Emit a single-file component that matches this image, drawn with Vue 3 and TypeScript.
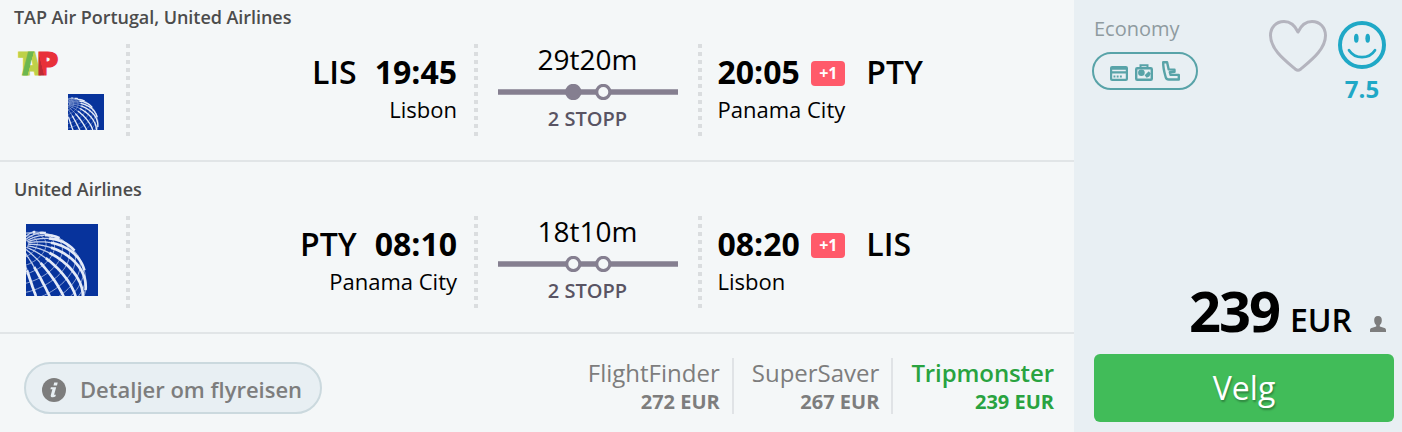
<script setup lang="ts">
interface Leg {
  airlines: string
  logos: 'pair' | 'single'
  from: { code: string; time: string; city: string }
  to: { code: string; time: string; city: string }
  duration: string
  stops: string
  firstStopFilled: boolean
}

interface Offer {
  name: string
  price: string
  best: boolean
}

const legs: Leg[] = [
  {
    airlines: 'TAP Air Portugal, United Airlines',
    logos: 'pair',
    from: { code: 'LIS', time: '19:45', city: 'Lisbon' },
    to: { code: 'PTY', time: '20:05', city: 'Panama City' },
    duration: '29t20m',
    stops: '2 STOPP',
    firstStopFilled: true,
  },
  {
    airlines: 'United Airlines',
    logos: 'single',
    from: { code: 'PTY', time: '08:10', city: 'Panama City' },
    to: { code: 'LIS', time: '08:20', city: 'Lisbon' },
    duration: '18t10m',
    stops: '2 STOPP',
    firstStopFilled: false,
  },
]

const offers: Offer[] = [
  { name: 'FlightFinder', price: '272 EUR', best: false },
  { name: 'SuperSaver', price: '267 EUR', best: false },
  { name: 'Tripmonster', price: '239 EUR', best: true },
]

type Vec = [number, number, number]

// Orthographic globe grid: the pole leans up and to the left, towards the viewer.
const radius = 51
const cx = 9
const cy = 59
const pole: Vec = [-0.3, -0.74, Math.sqrt(1 - 0.09 - 0.5476)]
const cross = (a: Vec, b: Vec): Vec => [
  a[1] * b[2] - a[2] * b[1],
  a[2] * b[0] - a[0] * b[2],
  a[0] * b[1] - a[1] * b[0],
]
const unit = (v: Vec): Vec => {
  const n = Math.hypot(...v)
  return [v[0] / n, v[1] / n, v[2] / n]
}
const east = unit(cross(pole, [0, 0, 1]))
const north = cross(pole, east)

function trace(steps: number, at: (i: number) => [number, number]): string {
  let d = ''
  let pen = false
  for (let i = 0; i <= steps; i++) {
    const [colat, lon] = at(i)
    const s = Math.sin(colat)
    const p = [0, 1, 2].map(
      (k) => Math.cos(colat) * pole[k] + s * (Math.cos(lon) * east[k] + Math.sin(lon) * north[k]),
    )
    if (p[2] < 0) {
      pen = false
      continue
    }
    d += `${pen ? 'L' : 'M'}${(cx + radius * p[0]).toFixed(1)} ${(cy + radius * p[1]).toFixed(1)}`
    pen = true
  }
  return d
}

const rad = Math.PI / 180
const meridiansAt = (from: number, to: number): string =>
  Array.from({ length: 24 }, (_, m) =>
    trace(40, (i) => [(from + (i * (to - from)) / 40) * rad, (m * 15 + 5) * rad]),
  ).join('')
const innerMeridians = meridiansAt(10, 36)
const outerMeridians = meridiansAt(36, 150)
const parallels = Array.from({ length: 12 }, (_, n) =>
  trace(72, (i) => [(n + 1) * 10 * rad, i * 5 * rad]),
).join('')
</script>

<template>
  <div class="card">
    <main class="trip">
      <section v-for="(leg, i) in legs" :key="i" class="leg">
        <div class="airlines">{{ leg.airlines }}</div>
        <div class="leg-body">
          <div class="logos" :class="leg.logos">
            <svg v-if="leg.logos === 'pair'" class="tap" viewBox="0 0 42 26">
              <defs>
                <linearGradient id="tapA" gradientUnits="userSpaceOnUse" x1="5" y1="11" x2="20" y2="15">
                  <stop offset="0.55" stop-color="#6cb74f" />
                  <stop offset="0.58" stop-color="#bed148" />
                </linearGradient>
                <linearGradient id="tapP" gradientUnits="userSpaceOnUse" x1="20" y1="14" x2="30" y2="11.5">
                  <stop offset="0.4" stop-color="#bd2a36" />
                  <stop offset="0.44" stop-color="#e83039" />
                </linearGradient>
              </defs>
              <text class="tap-letter" x="1" y="24" textLength="17" lengthAdjust="spacingAndGlyphs" fill="#bed148" stroke="#bed148">T</text>
              <text class="tap-letter" x="5.500" y="24" textLength="18" lengthAdjust="spacingAndGlyphs" fill="url(#tapA)" stroke="url(#tapA)">A</text>
              <text class="tap-letter" x="19.500" y="24" textLength="22" lengthAdjust="spacingAndGlyphs" fill="url(#tapP)" stroke="url(#tapP)">P</text>
            </svg>
            <svg class="globe" viewBox="0 0 72 72">
              <rect width="72" height="72" fill="#07339c" />
              <circle :cx="cx" :cy="cy" :r="radius" fill="none" stroke="#8fa5d6" stroke-width="1" />
              <path :d="parallels" fill="none" stroke="#8fa5d6" stroke-width="1" />
              <path :d="innerMeridians" fill="none" stroke="#c3cfec" stroke-width="1.3" />
              <path :d="outerMeridians" fill="none" stroke="#e4eaf7" stroke-width="2.7" />
            </svg>
          </div>
          <div class="dots"></div>
          <div class="place depart">
            <div class="top"><span class="code">{{ leg.from.code }}</span><b class="time">{{ leg.from.time }}</b></div>
            <div class="city">{{ leg.from.city }}</div>
          </div>
          <div class="dots"></div>
          <div class="duration">
            <div class="length">{{ leg.duration }}</div>
            <svg class="track" viewBox="0 0 180 16">
              <path d="M0 8H180" stroke="#857f90" stroke-width="5.6" />
              <circle cx="75.3" cy="8" r="6.6" :fill="leg.firstStopFilled ? '#857f90' : '#f4f7f8'" stroke="#857f90" stroke-width="3.2" />
              <circle cx="105.3" cy="8" r="6.6" fill="#f4f7f8" stroke="#857f90" stroke-width="3.2" />
            </svg>
            <div class="stops">{{ leg.stops }}</div>
          </div>
          <div class="dots"></div>
          <div class="place arrive">
            <div class="top"><b class="time">{{ leg.to.time }}</b><span class="badge">+1</span><span class="code">{{ leg.to.code }}</span></div>
            <div class="city">{{ leg.to.city }}</div>
          </div>
        </div>
      </section>
      <footer class="foot">
        <button class="details">
          <svg class="info" viewBox="0 0 24 24">
            <circle cx="12" cy="12" r="12" fill="#7d7d7d" />
            <path d="M12.2 4.400h3.500l-.7 3.200h-3.500zM8.900 9.200h5.300l-2.100 7.600h1.800l-.5 1.800c-1.700.9-5.100 1-4.700-1.200l1.700-6.200H8.400z" fill="#e8eff3" />
          </svg>
          <span>Detaljer om flyreisen</span>
        </button>
        <div class="offers">
          <div v-for="offer in offers" :key="offer.name" class="offer" :class="{ best: offer.best }">
            <div class="offer-name">{{ offer.name }}</div>
            <div class="offer-price">{{ offer.price }}</div>
          </div>
        </div>
      </footer>
    </main>
    <aside class="side">
      <div class="side-top">
        <div>
          <div class="cabin">Economy</div>
          <div class="amenities">
            <svg class="a-card" viewBox="0 0 18 15">
              <rect x="1.1" y="1.1" width="15.800" height="12.800" rx="1" fill="none" stroke="#58a3a8" stroke-width="2.200" />
              <path d="M1 2.600H17M1 6.400H17" stroke="#58a3a8" stroke-width="2.200" />
              <path d="M3.500 10.600h8.500" stroke="#58a3a8" stroke-width="2" stroke-dasharray="1.900 1.300" />
            </svg>
            <svg class="a-bag" viewBox="0 0 18 17">
              <rect x="1.200" y="4.200" width="15.600" height="11.600" rx="1" fill="none" stroke="#58a3a8" stroke-width="2.400" />
              <path d="M5.500 4V1.200h7V4" fill="none" stroke="#58a3a8" stroke-width="2" />
              <circle cx="6.400" cy="8.800" r="3.300" fill="#58a3a8" />
              <path d="M9.600 11.200l4.200-4 2 2.300-1.500 3-2.700 1.200z" fill="#58a3a8" />
            </svg>
            <svg class="a-seat" viewBox="0 0 18 20">
              <path d="M1.200 1.200h3.900l1.600 7.200 5.800.3v2.200l-4.700.3.8 2.700h8.200v4.600H6.800c-1.800 0-2.700-1-3.100-2.400C2.400 11.500 1 7 1.200 1.200Z" fill="none" stroke="#58a3a8" stroke-width="2.400" stroke-linejoin="round" />
            </svg>
          </div>
        </div>
        <svg class="heart" viewBox="0 0 58 52">
          <path d="M29 12C25.500 4.500 20.500 1.500 15 1.500 7 1.500 1.500 7.500 1.500 15.500 1.500 29 15 39.500 26.500 49.300Q29 51.200 31.500 49.300C43 39.500 56.500 29 56.500 15.500 56.500 7.500 51 1.500 43 1.500 37.500 1.500 32.500 4.500 29 12Z" fill="none" stroke="#b4b4be" stroke-width="3" stroke-linejoin="round" />
        </svg>
        <div class="score">
          <svg class="smile" viewBox="0 0 48 48">
            <circle cx="24" cy="24" r="22" fill="none" stroke="#1fa8c6" stroke-width="4" />
            <ellipse cx="18.300" cy="17.200" rx="2.300" ry="4.500" fill="#1fa8c6" />
            <ellipse cx="29.700" cy="17.200" rx="2.300" ry="4.500" fill="#1fa8c6" />
            <path d="M11 29.200C17 38.500 31 38.500 37 29.200" fill="none" stroke="#1fa8c6" stroke-width="2.700" stroke-linecap="round" />
          </svg>
          <div class="rating">7.5</div>
        </div>
      </div>
      <div class="side-bottom">
        <div class="price">
          <span class="amount">239</span><span class="currency">EUR</span>
          <svg class="person" viewBox="0 0 16 16">
            <path d="M8 0C5.200 0 4 1.800 4.200 4.500 4.300 6.500 5 8 6.200 9v1.600L1.500 12C.4 12.400 0 13.200 0 14.300V16H16V14.300C16 13.200 15.600 12.400 14.500 12L9.800 10.600V9C11 8 11.700 6.500 11.800 4.500 12 1.800 10.800 0 8 0Z" fill="#7d7d7d" />
          </svg>
        </div>
        <button class="select">Velg</button>
      </div>
    </aside>
  </div>
</template>

<style>
html,
body {
  margin: 0;
  overflow: hidden;
}
</style>

<style scoped>
* {
  box-sizing: border-box;
}
.card {
  display: flex;
  width: 1402px;
  height: 432px;
  overflow: hidden;
  background: #f4f7f8;
  color: #000;
  font-family: 'Open Sans', 'Noto Sans', sans-serif;
}
svg {
  display: block;
  flex: none;
}
button {
  font-family: inherit;
  margin: 0;
}
.trip {
  width: 1074px;
}
.leg {
  height: 172px;
  padding-top: 15px;
  border-bottom: 2px solid #e1e5e7;
}
.leg:first-child {
  margin-top: -10px;
}
.airlines {
  padding-left: 14px;
  font-size: 18px;
  line-height: 24px;
  font-weight: 600;
  letter-spacing: -0.05px;
  color: #4c4c4c;
  white-space: nowrap;
}
.leg-body {
  display: flex;
  height: 107px;
  padding-top: 15px;
}
.logos {
  width: 126px;
}
.pair {
  padding: 7px 0 0 17px;
}
.tap {
  width: 42px;
  height: 26px;
  overflow: visible;
}
.tap-letter {
  font-family: 'Open Sans', sans-serif;
  font-size: 31px;
  font-weight: 800;
  stroke-width: 1.2;
}
.pair .globe {
  width: 36px;
  height: 36px;
  margin: 17px 0 0 51px;
}
.single {
  padding: 8px 0 0 26px;
}
.single .globe {
  width: 72px;
  height: 72px;
}
.dots {
  width: 4px;
  height: 92px;
  background: repeating-linear-gradient(#dadddf 0 4px, transparent 4px 8px);
}
.place {
  padding-top: 6px;
}
.depart {
  width: 344px;
  padding-right: 17px;
  text-align: right;
}
.arrive {
  padding-left: 15.5px;
}
.top {
  display: flex;
  align-items: center;
  height: 44px;
  font-size: 32px;
  line-height: 44px;
}
.depart .top {
  justify-content: flex-end;
}
.code {
  font-weight: 600;
}
.time {
  font-weight: 700;
}
.depart .time {
  margin-left: 18px;
}
.badge {
  width: 34px;
  height: 25px;
  margin: 3px 21px 0 11.5px;
  border-radius: 4px;
  background: #ff5a6a;
  color: #fff;
  font-size: 16px;
  line-height: 24px;
  font-weight: 700;
  text-align: center;
}
.city {
  font-size: 22px;
  line-height: 30px;
}
.duration {
  width: 219px;
  margin-right: 1px;
  display: flex;
  flex-direction: column;
  align-items: center;
}
.length {
  height: 40px;
  font-size: 28px;
  line-height: 30px;
}
.track {
  width: 180px;
  height: 16px;
  margin-left: 1px;
}
.stops {
  margin-top: 5px;
  font-size: 20px;
  line-height: 28px;
  font-weight: 600;
  color: #595463;
}
.foot {
  display: flex;
  justify-content: space-between;
  padding: 24px 0 0 24px;
}
.details {
  display: flex;
  align-items: center;
  width: 298px;
  height: 52px;
  margin-top: 4px;
  padding: 2px 0 0 16px;
  border: 2px solid #cbd9de;
  border-radius: 26px;
  background: #e8eff3;
  color: #7d7d7d;
  font-size: 22px;
  font-weight: 600;
  white-space: nowrap;
}
.info {
  width: 24px;
  height: 24px;
  margin: 2px 14px 0 0;
}
.offers {
  display: flex;
  padding-right: 7px;
}
.offer {
  height: 56px;
  padding: 0 12px 0 18px;
  border-right: 2px solid #e0e3e6;
  color: #7d7d7d;
  text-align: right;
}
.offer.best {
  padding-right: 13px;
  color: #29a340;
  border-right: 0;
}
.offer-name {
  font-size: 24px;
  line-height: 30px;
}
.best .offer-name {
  font-weight: 600;
  letter-spacing: -0.1px;
}
.offer-price {
  font-size: 20px;
  line-height: 28px;
  font-weight: 700;
}
.side {
  display: flex;
  flex-direction: column;
  justify-content: space-between;
  width: 328px;
  padding: 15px 8px 10px 18px;
  background: #e8eff3;
}
.side-top {
  display: flex;
}
.cabin {
  padding-left: 2px;
  font-size: 20px;
  line-height: 27px;
  color: #8f9ba0;
}
.amenities {
  display: flex;
  width: 106px;
  height: 38px;
  margin-top: 10px;
  padding-left: 16px;
  border: 2px solid #58a3a8;
  border-radius: 19px;
}
.a-card {
  width: 18px;
  height: 15px;
  margin-top: 12px;
}
.a-bag {
  width: 18px;
  height: 17px;
  margin: 10px 0 0 7px;
}
.a-seat {
  width: 18px;
  height: 20px;
  margin: 7px 0 0 9px;
  overflow: visible;
}
.heart {
  width: 58px;
  height: 52px;
  margin: 5px 0 0 71px;
}
.score {
  width: 48px;
  margin: 6px 0 0 11px;
  text-align: center;
}
.smile {
  width: 48px;
  height: 48px;
}
.rating {
  margin-top: 4px;
  font-size: 24px;
  line-height: 32px;
  font-weight: 700;
  color: #1fa8c6;
}
.price {
  display: flex;
  align-items: baseline;
  justify-content: flex-end;
  height: 82px;
  padding-right: 8px;
  line-height: 76px;
}
.amount {
  font-size: 56px;
  font-weight: 700;
  letter-spacing: -2px;
}
.currency {
  margin-left: 11px;
  font-size: 32px;
  font-weight: 600;
}
.person {
  width: 16px;
  height: 16px;
  margin-left: 18px;
}
.select {
  width: 300px;
  height: 68px;
  margin-left: 2px;
  padding: 0;
  border: 0;
  border-radius: 6px;
  background: #41bc59;
  color: #fff;
  font-size: 32px;
  line-height: 68px;
  font-weight: 400;
  text-shadow: 1px 2px 2px rgba(0, 0, 0, 0.3);
  display: block;
}
</style>
